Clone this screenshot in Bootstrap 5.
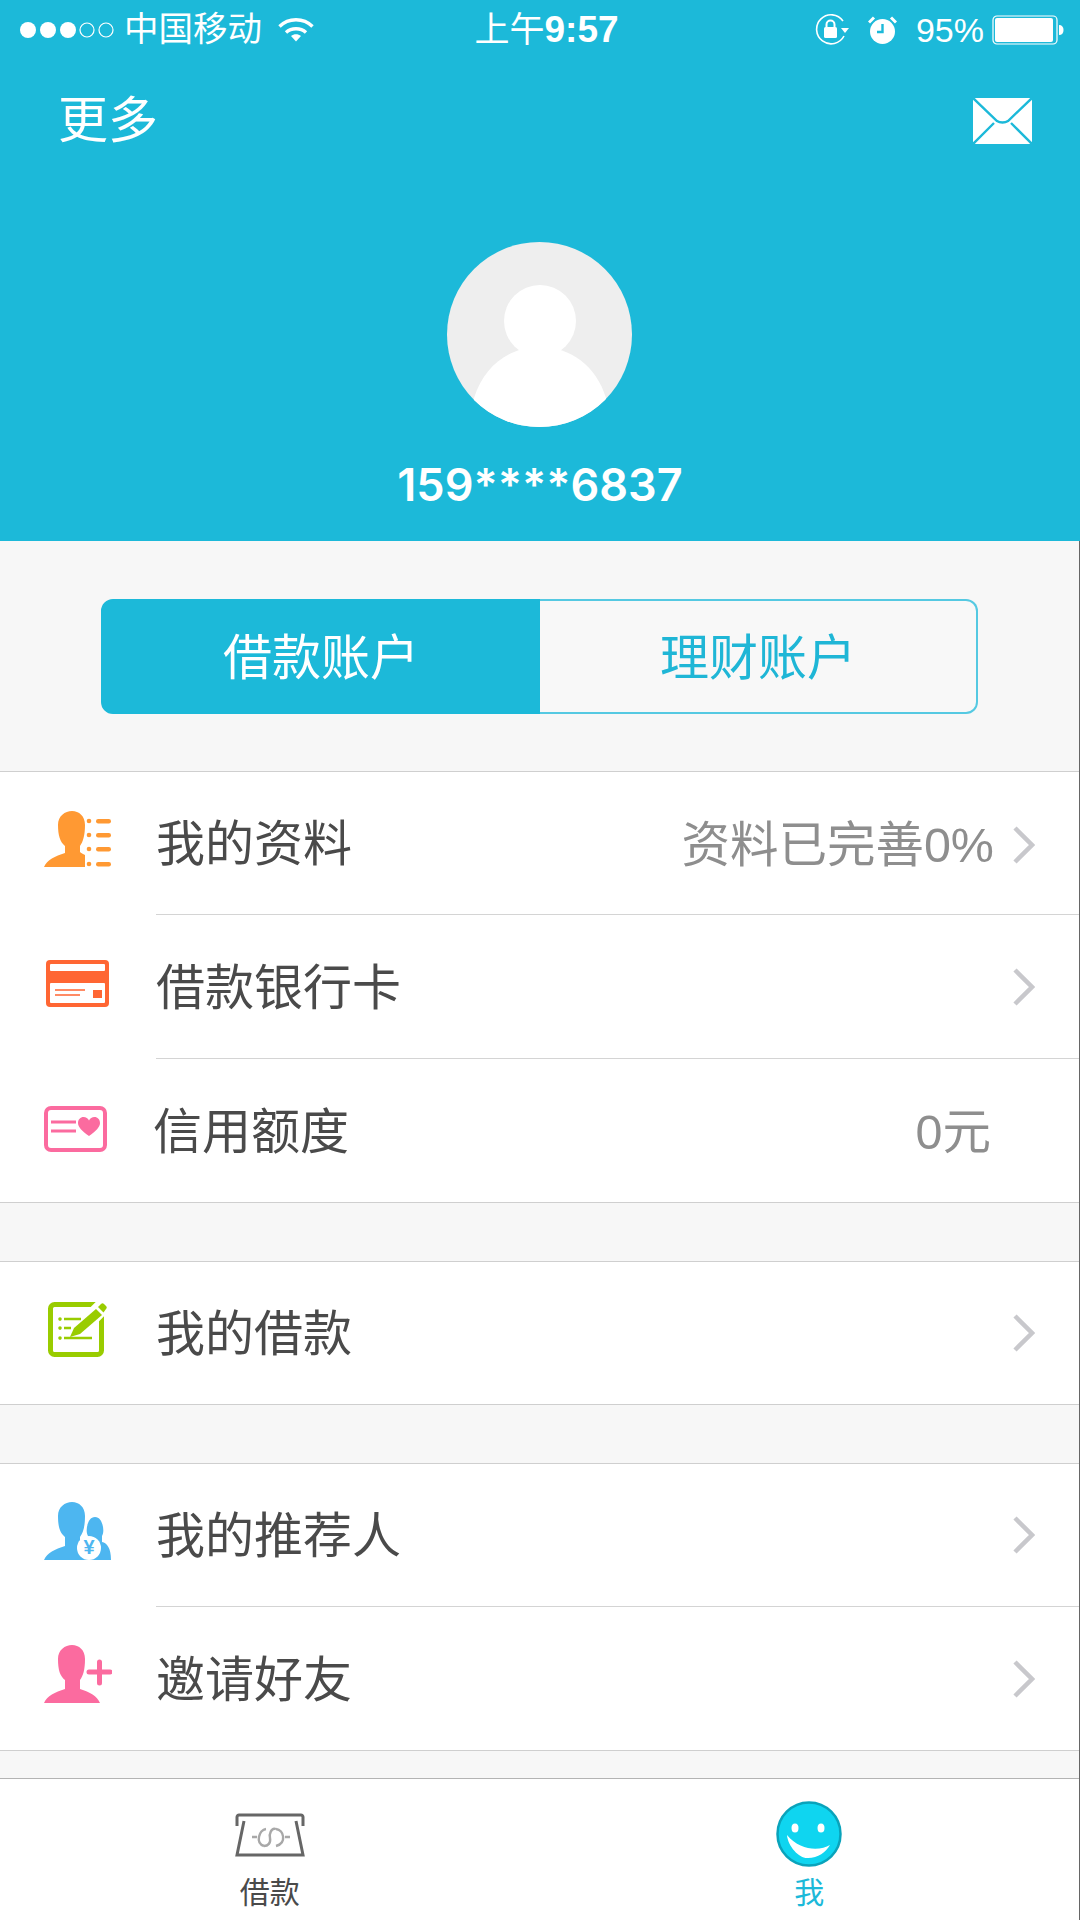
<!DOCTYPE html>
<html lang="zh-CN">
<head>
    <meta charset="utf-8">
    <title>更多</title>
    <link rel="stylesheet" href="https://cdn.jsdelivr.net/npm/bootstrap@5.3.2/dist/css/bootstrap.min.css">
    <style>
        body { margin: 0; width: 1080px; height: 1920px; overflow: hidden; background: #f7f7f7;
            font-family: "Liberation Sans", "Noto Sans CJK SC", sans-serif; color: #4a4a4a; }
        svg { display: block; flex: none; }
        .app-page { height: 1920px; }

        .top-panel { height: 541px; background: #1cb9d9; color: #fff; }
        .status-row { height: 60px; padding: 0 16px 0 19px; font-size: 34px; }
        .status-side { flex: 1 1 0; }
        .status-carrier { font-size: 34.5px; margin-left: 9px; }
        .status-time { padding-left: 10px; font-size: 35px; }
        .status-time b { font-size: 37px; font-weight: 700; }
        .alarm-gap { margin-left: 19px; }
        .pct-gap { margin-left: 19px; }
        .title-row { height: 120px; padding: 2px 48px 0 58px; font-size: 50px; }
        .avatar-ring { width: 185px; height: 185px; margin: 62px 448px 0 447px; border-radius: 50%; overflow: hidden; }
        .phone-text { margin-top: 28px; height: 60px; line-height: 60px; font-family: Inter, sans-serif;
            font-size: 45px; font-weight: 600; text-align: center; }

        .under-panel { height: 1379px; border-right: 1px solid #666; }
        .switch-wrap { height: 230px; padding: 58px 101px 0 101px; }
        .switch-wrap .btn { height: 115px; font-size: 49px; line-height: 1; border-radius: 12px; padding: 3px 0 0;
            border: 2px solid #55c9e2; box-shadow: none; }
        .switch-wrap .switch-on, .switch-wrap .switch-on:hover { flex: 0 0 440px; background: #1cb9d9; color: #fff; border-color: #1cb9d9; }
        .switch-wrap .switch-off, .switch-wrap .switch-off:hover { flex: 1 1 0; background: #f8f8f8; color: #1fb6d6; border-left: 0; margin-left: 0; }

        .menu-group { border-radius: 0; border-top: 1px solid #cfcfcf; border-bottom: 1px solid #cfcfcf; background: #fff; }
        .menu-group + .menu-group { margin-top: 58px; }
        .menu-group .list-group-item { padding: 0; border: 0; background: #fff; color: #4a4a4a; }
        .menu-row { height: 143px; }
        .menu-row-tall { height: 144px; }
        .menu-row-short { height: 142px; }
        .menu-icon { width: 156px; padding-left: 44px; }
        .menu-body { height: 100%; padding-right: 44px; font-size: 49px; }
        .menu-body > span { padding-top: 4px; }
        .has-rule .menu-body { border-bottom: 1px solid #d4d4d4; }
        .menu-value { color: #8e8e8e; font-size: 48.500px; margin-right: 19px; }
        .menu-value-end { margin-right: 44px; }
        .shift-left { margin-left: -3px; }
        .lift-icon { margin-bottom: 10px; }
        .card-glyph { margin: 0 0 8px 2px; }

        .tab-bar { height: 142px; background: #fff; border-top: 1px solid #b4b4b4; }
        .tab-cell { width: 50%; padding-top: 22px; font-size: 30px; }
        .tab-icon { height: 66px; }
        .tab-label { line-height: 1; margin-top: 11px; }
        .tab-active { color: #1cb9d9; }
        .atm-glyph { margin-bottom: 10px; }
    </style>
</head>
<body>
<div class="app-page d-flex flex-column">

    <header class="top-panel">
        <div class="status-row d-flex align-items-center">
            <div class="status-side d-flex align-items-center">
                <svg width="96" height="20" viewBox="0 0 96 20">
                    <circle cx="9" cy="10" r="8" fill="#fff"/>
                    <circle cx="29" cy="10" r="8" fill="#fff"/>
                    <circle cx="49" cy="10" r="8" fill="#fff"/>
                    <circle cx="68" cy="10" r="7" fill="none" stroke="#fff" stroke-width="1.2"/>
                    <circle cx="87" cy="10" r="7" fill="none" stroke="#fff" stroke-width="1.2"/>
                </svg>
                <span class="status-carrier">中国移动</span>
                <svg class="ms-3" width="36" height="24" viewBox="0 0 36 24" fill="none" stroke="#fff" stroke-width="3.4">
                    <path d="M1.5 8.5C10.5 -0.5 25.5 -0.5 34.500 8.500"/>
                    <path d="M8 14.500C13.500 9.500 22.500 9.500 28 14.500"/>
                    <path d="M13 18L18 23.500L23 18C20 15.500 16 15.500 13 18Z" fill="#fff" stroke="none"/>
                </svg>
            </div>
            <div class="status-time">上午<b>9:57</b></div>
            <div class="status-side d-flex align-items-center justify-content-end">
                <svg width="34" height="32" viewBox="0 0 34 32" fill="none" stroke="#fff" stroke-width="1.6">
                    <path d="M28 7A14.500 14.500 0 1 0 29 22"/>
                    <path d="M26 14L34 14L30 19Z" fill="#fff" stroke="none"/>
                    <rect x="9" y="13" width="13" height="11" rx="1.500" fill="#fff" stroke="none"/>
                    <path d="M11.500 13V10.500A4 4 0 0 1 19.500 10.500V13" stroke-width="2"/>
                </svg>
                <svg class="alarm-gap" width="29" height="28" viewBox="0 0 29 28">
                    <circle cx="14.500" cy="15.500" r="12.500" fill="#fff"/>
                    <path d="M1 6.500L6 1.500M28 6.500L23 1.500" stroke="#fff" stroke-width="3"/>
                    <path d="M14.500 8V16H9" fill="none" stroke="#1cb9d9" stroke-width="2.400"/>
                </svg>
                <span class="pct-gap">95%</span>
                <svg class="ms-2" width="72" height="30" viewBox="0 0 72 30">
                    <rect x="1" y="1" width="64" height="28" rx="4" fill="none" stroke="#fff" stroke-width="1.200"/>
                    <rect x="3" y="3" width="58" height="24" rx="2" fill="#fff"/>
                    <path d="M67 10C70 10 71.500 12 71.500 15C71.500 18 70 20 67 20Z" fill="#fff"/>
                </svg>
            </div>
        </div>

        <div class="title-row d-flex align-items-center justify-content-between">
            <span>更多</span>
            <svg width="59" height="46" viewBox="0 0 59 46">
                <rect width="59" height="46" rx="3" fill="#fff"/>
                <path d="M0 0L24 23C27 25 32 25 35 23L59 0M0 46L21 25M59 46L38 25" fill="none" stroke="#1cb9d9" stroke-width="2.400"/>
            </svg>
        </div>

        <div class="avatar-ring">
            <svg width="185" height="185" viewBox="0 0 185 185">
                <rect width="185" height="185" fill="#eeeeee"/>
                <circle cx="93" cy="79" r="36" fill="#fff"/>
                <path d="M27 156C37 124 62 105 93 105C124 105 149 124 159 156L159 185L27 185Z" fill="#fff"/>
            </svg>
        </div>
        <div class="phone-text">159****6837</div>
    </header>

    <div class="under-panel d-flex flex-column">
        <div class="switch-wrap">
            <div class="btn-group w-100" role="group">
                <button type="button" class="btn switch-on">借款账户</button>
                <button type="button" class="btn switch-off">理财账户</button>
            </div>
        </div>

        <ul class="list-group list-group-flush menu-group">
            <li class="list-group-item has-rule">
                <div class="menu-row d-flex align-items-center">
                    <div class="menu-icon">
                        <svg class="lift-icon" width="68" height="56" viewBox="0 0 68 56" fill="#ff9933">
                            <path d="M0 56C3 49 11 45 21 42L21 35C16 31 14 24 14 14C14 5 21 0 28 0C35 0 41 5 41 14C41 24 39 31 36 35L36 41C37 42 39 43 41 44L41 56Z"/>
                            <circle cx="45" cy="10" r="2.300"/><rect x="52" y="8" width="15" height="4.500" rx="2.200"/>
                            <circle cx="45" cy="24" r="2.300"/><rect x="52" y="22" width="15" height="4.500" rx="2.200"/>
                            <circle cx="45" cy="38" r="2.300"/><rect x="52" y="36" width="15" height="4.500" rx="2.200"/>
                            <circle cx="45" cy="53" r="2.300"/><rect x="52" y="51" width="15" height="4.500" rx="2.200"/>
                        </svg>
                    </div>
                    <div class="menu-body flex-grow-1 d-flex align-items-center justify-content-between">
                        <span>我的资料</span>
                        <span class="d-flex align-items-center">
                            <span class="menu-value">资料已完善0%</span>
                            <svg width="22" height="38" viewBox="0 0 22 38" fill="none" stroke="#c8c8cc" stroke-width="4.500"><path d="M2 2L19 19L2 36"/></svg>
                        </span>
                    </div>
                </div>
            </li>
            <li class="list-group-item has-rule">
                <div class="menu-row menu-row-tall d-flex align-items-center">
                    <div class="menu-icon">
                        <svg class="card-glyph" width="63" height="47" viewBox="0 0 63 47">
                            <rect width="63" height="47" rx="4" fill="#ff6633"/>
                            <rect x="4" y="4" width="55" height="7" rx="1" fill="#fff"/>
                            <rect x="4" y="23" width="55" height="20" rx="1" fill="#fff"/>
                            <path d="M9 30H39M9 35H34" stroke="#ff6633" stroke-width="1.600"/>
                            <rect x="47" y="30" width="9" height="8" fill="#ff6633"/>
                        </svg>
                    </div>
                    <div class="menu-body flex-grow-1 d-flex align-items-center justify-content-between">
                        <span>借款银行卡</span>
                        <svg width="22" height="38" viewBox="0 0 22 38" fill="none" stroke="#c8c8cc" stroke-width="4.500"><path d="M2 2L19 19L2 36"/></svg>
                    </div>
                </div>
            </li>
            <li class="list-group-item">
                <div class="menu-row d-flex align-items-center">
                    <div class="menu-icon">
                        <svg class="mb-1" width="63" height="46" viewBox="0 0 63 46">
                            <rect x="2" y="2" width="59" height="42" rx="5" fill="#fff" stroke="#fb6b9f" stroke-width="4"/>
                            <path d="M7 16H32M7 25H32" stroke="#fb6b9f" stroke-width="3"/>
                            <path d="M45 30C38 25 34 21 34 17C34 13.500 36.500 11 39.500 11C42 11 44 12.500 45 14.500C46 12.500 48 11 50.500 11C53.500 11 56 13.500 56 17C56 21 52 25 45 30Z" fill="#fb6b9f"/>
                        </svg>
                    </div>
                    <div class="menu-body flex-grow-1 d-flex align-items-center justify-content-between">
                        <span class="shift-left">信用额度</span>
                        <span class="menu-value menu-value-end">0元</span>
                    </div>
                </div>
            </li>
        </ul>

        <ul class="list-group list-group-flush menu-group">
            <li class="list-group-item">
                <div class="menu-row menu-row-short d-flex align-items-center">
                    <div class="menu-icon">
                        <svg class="ms-1 mb-2" width="60" height="56" viewBox="0 0 60 56">
                            <rect x="2.500" y="3.500" width="51" height="50" rx="4" fill="none" stroke="#99cc00" stroke-width="5"/>
                            <path d="M60 0L24 36" stroke="#fff" stroke-width="16"/>
                            <path d="M12 18V18.100M12 27V27.100M12 37V37.100" stroke="#99cc00" stroke-width="3.600" stroke-linecap="round"/>
                            <path d="M16 18H33M16 27H23M16 37H44" stroke="#99cc00" stroke-width="2.600"/>
                            <path d="M48 8L54 14L32 33L22 36L26 27Z" fill="#99cc00"/>
                            <path d="M50 6L53 3C54 2 55 2 56 3L58 5C59 6 59 7 58 8L55.500 11.500Z" fill="#99cc00"/>
                        </svg>
                    </div>
                    <div class="menu-body flex-grow-1 d-flex align-items-center justify-content-between">
                        <span>我的借款</span>
                        <svg width="22" height="38" viewBox="0 0 22 38" fill="none" stroke="#c8c8cc" stroke-width="4.500"><path d="M2 2L19 19L2 36"/></svg>
                    </div>
                </div>
            </li>
        </ul>

        <ul class="list-group list-group-flush menu-group">
            <li class="list-group-item has-rule">
                <div class="menu-row d-flex align-items-center">
                    <div class="menu-icon">
                        <svg class="lift-icon" width="68" height="58" viewBox="0 0 68 58" fill="#4db6f0">
                            <path d="M0 58C3 51 11 47 21 44L21 35C16 31 14 25 14 14C14 5 21 0 28 0C35 0 41 5 41 14C41 25 39 31 36 35L36 44L41 58Z"/>
                            <path d="M37 58L43 40L44 34C41 30 43 15 51 15C59 15 61 30 58 34L58 40C63 41 67 46 67 58Z"/>
                            <circle cx="45" cy="46" r="12" fill="#fff"/>
                            <text x="45" y="52" text-anchor="middle" font-family="Liberation Sans, sans-serif" font-size="20" font-weight="700">¥</text>
                        </svg>
                    </div>
                    <div class="menu-body flex-grow-1 d-flex align-items-center justify-content-between">
                        <span>我的推荐人</span>
                        <svg width="22" height="38" viewBox="0 0 22 38" fill="none" stroke="#c8c8cc" stroke-width="4.500"><path d="M2 2L19 19L2 36"/></svg>
                    </div>
                </div>
            </li>
            <li class="list-group-item">
                <div class="menu-row d-flex align-items-center">
                    <div class="menu-icon">
                        <svg class="lift-icon" width="68" height="58" viewBox="0 0 68 58" fill="#fb6b9f">
                            <path d="M0 58C3 51 11 47 21 44L21 35C16 31 14 25 14 14C14 5 21 0 28 0C35 0 41 5 41 14C41 25 39 31 36 35L36 44C46 47 53 51 56 58Z"/>
                            <path d="M45 27H66M55.500 17V38" fill="none" stroke="#fb6b9f" stroke-width="5" stroke-linecap="round"/>
                        </svg>
                    </div>
                    <div class="menu-body flex-grow-1 d-flex align-items-center justify-content-between">
                        <span>邀请好友</span>
                        <svg width="22" height="38" viewBox="0 0 22 38" fill="none" stroke="#c8c8cc" stroke-width="4.500"><path d="M2 2L19 19L2 36"/></svg>
                    </div>
                </div>
            </li>
        </ul>

        <nav class="tab-bar d-flex mt-auto">
            <div class="tab-cell d-flex flex-column align-items-center">
                <div class="tab-icon d-flex align-items-end">
                    <svg class="atm-glyph" width="70" height="44" viewBox="0 0 70 44" fill="none" stroke="#666" stroke-width="3">
                        <path d="M2 13V4C2 3 3 2 4 2H66C67 2 68 3 68 4V13"/>
                        <path d="M9 8L2 42H68L61 8"/>
                        <g stroke="#a8a8a8" stroke-width="2.400">
                            <path d="M31 16C24 17 20 30 29 33M41 16C49 17 52 30 41 33"/>
                            <path d="M41 16C36 14 34 22 35 25C36 30 33 33 29 33"/>
                            <path d="M17 24H22M50 24H55"/>
                        </g>
                    </svg>
                </div>
                <div class="tab-label">借款</div>
            </div>
            <div class="tab-cell tab-active d-flex flex-column align-items-center">
                <div class="tab-icon d-flex align-items-end">
                    <svg width="66" height="66" viewBox="0 0 66 66">
                        <circle cx="33" cy="33" r="31.500" fill="#0fd5f0" stroke="#0aa3bb" stroke-width="2.500"/>
                        <ellipse cx="19" cy="27" rx="3.500" ry="4.500" fill="#fff"/>
                        <ellipse cx="45" cy="27" rx="3.500" ry="4.500" fill="#fff"/>
                        <path d="M11 34C12 46 24 58 32 57C42 57 50 51 54 44C44 50 24 50 11 34Z" fill="#fff"/>
                    </svg>
                </div>
                <div class="tab-label">我</div>
            </div>
        </nav>
    </div>
</div>
<script src="https://cdn.jsdelivr.net/npm/bootstrap@5.3.2/dist/js/bootstrap.bundle.min.js"></script>
</body>
</html>
